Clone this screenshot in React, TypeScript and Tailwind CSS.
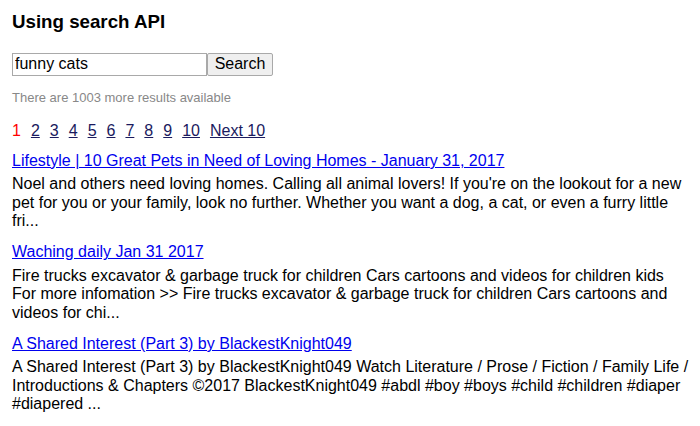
const results = [
  {
    title: 'Lifestyle | 10 Great Pets in Need of Loving Homes - January 31, 2017',
    text: "Noel and others need loving homes. Calling all animal lovers! If you're on the lookout for a new pet for you or your family, look no further. Whether you want a dog, a cat, or even a furry little fri...",
  },
  {
    title: 'Waching daily Jan 31 2017',
    text: 'Fire trucks excavator & garbage truck for children Cars cartoons and videos for children kids For more infomation >> Fire trucks excavator & garbage truck for children Cars cartoons and videos for chi...',
  },
  {
    title: 'A Shared Interest (Part 3) by BlackestKnight049',
    text: 'A Shared Interest (Part 3) by BlackestKnight049 Watch Literature / Prose / Fiction / Family Life / Introductions & Chapters ©2017 BlackestKnight049 #abdl #boy #boys #child #children #diaper #diapered ...',
  },
];

const pages = ['2', '3', '4', '5', '6', '7', '8', '9', '10', 'Next 10'];

export default function App() {
  return (
    <div className="w-[700px] h-[426px] bg-white pl-3 pr-2 pt-[11px] font-['Liberation_Sans',Arial,sans-serif] text-black text-[16px] leading-[1.15] overflow-hidden">
      <h3 className="text-[18.72px] font-bold leading-[1.15]">Using search API</h3>

      <div className="mt-[20px] flex">
        <input
          defaultValue="funny cats"
          className="w-[195px] h-[23px] border border-[#a9a9a9] px-[2px] text-[16px] outline-none"
        />
        <button className="w-[66px] h-[23px] border border-[#a9a9a9] bg-[#efefef] rounded-[2px] text-[16px]">
          Search
        </button>
      </div>

      <p className="mt-[15px] text-[13px] text-[#888]">There are 1003 more results available</p>

      <div className="mt-[17px] flex gap-[10px]">
        <span className="text-[#ff0000]">1</span>
        {pages.map((p) => (
          <a key={p} href="#" className="text-[#1a1a5e] underline">
            {p}
          </a>
        ))}
      </div>

      <div className="mt-[11px] flex flex-col gap-[13px]">
        {results.map((r) => (
          <div key={r.title}>
            <a href="#" className="text-[#0000ee] underline">
              {r.title}
            </a>
            <p className="mt-[5px]">{r.text}</p>
          </div>
        ))}
      </div>
    </div>
  );
}
